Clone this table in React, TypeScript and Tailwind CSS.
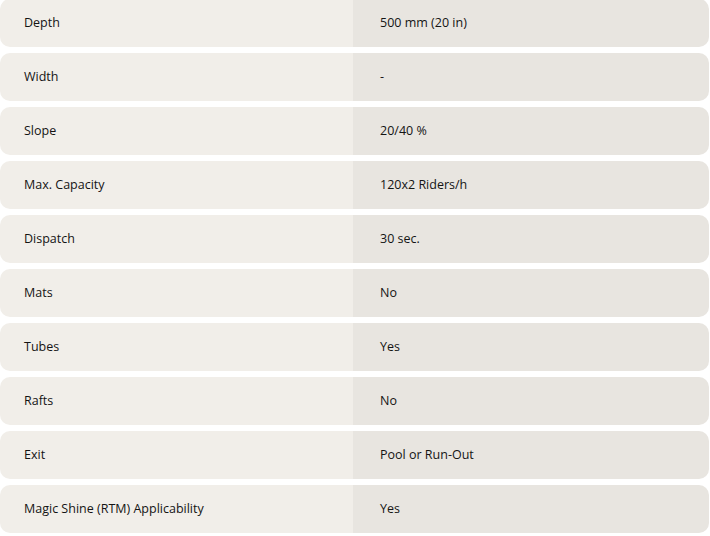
import React from "react";

const SPECS: [string, string][] = [
  ["Depth", "500 mm (20 in)"],
  ["Width", "-"],
  ["Slope", "20/40 %"],
  ["Max. Capacity", "120x2 Riders/h"],
  ["Dispatch", "30 sec."],
  ["Mats", "No"],
  ["Tubes", "Yes"],
  ["Rafts", "No"],
  ["Exit", "Pool or Run-Out"],
  ["Magic Shine (RTM) Applicability", "Yes"],
];

export default function App() {
  return (
    <div className="w-[710px] h-[536px] overflow-hidden bg-white">
      <div className="-mt-px flex w-[709px] flex-col gap-[6px] font-['Open_Sans',sans-serif] text-[12.5px] text-[#141414]">
        {SPECS.map(([label, value]) => (
          <div key={label} className="flex h-[48px] overflow-hidden rounded-[10px]">
            <div className="flex w-[353px] shrink-0 items-center bg-[#f1eee9] pl-[24px]">{label}</div>
            <div className="flex flex-1 items-center bg-[#e8e5e0] pl-[27px]">{value}</div>
          </div>
        ))}
      </div>
    </div>
  );
}
